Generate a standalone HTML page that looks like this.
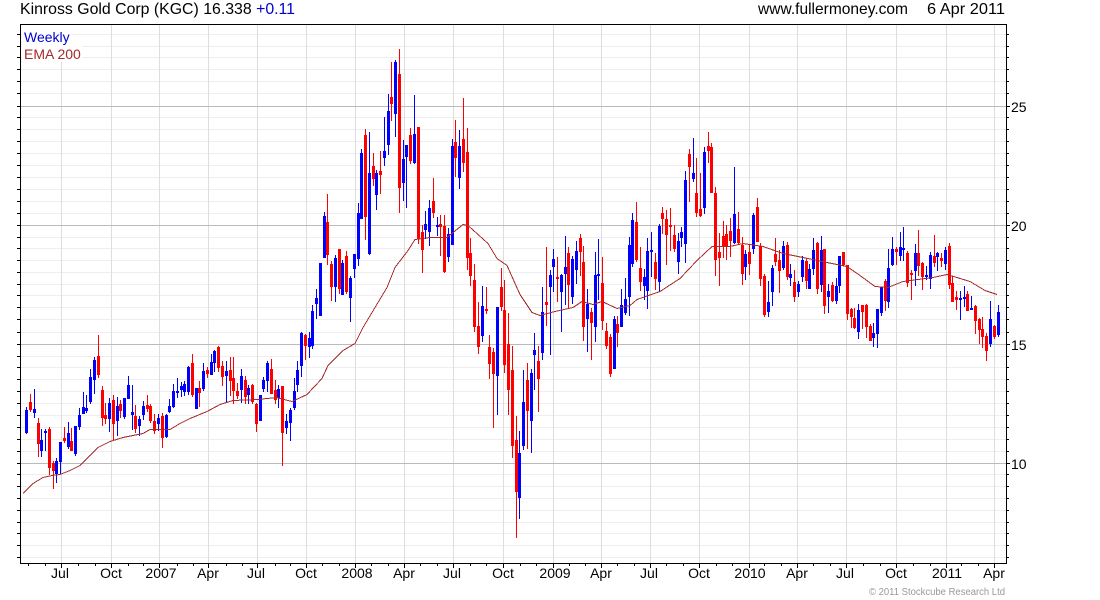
<!DOCTYPE html>
<html><head><meta charset="utf-8"><title>Kinross Gold Corp (KGC)</title>
<style>html,body{margin:0;padding:0;background:#fff;width:1100px;height:600px;overflow:hidden}svg{display:block}text{font-family:"Liberation Sans",Arial,sans-serif}</style></head>
<body>
<svg width="1100" height="600" viewBox="0 0 1100 600" xmlns="http://www.w3.org/2000/svg">
<rect width="1100" height="600" fill="#fff"/>
<g shape-rendering="crispEdges" fill="none" stroke-width="1">
<path stroke="#eee" d="M21 34.5H1006M21 46.5H1006M21 57.5H1006M21 69.5H1006M21 81.5H1006M21 93.5H1006M21 117.5H1006M21 129.5H1006M21 141.5H1006M21 153.5H1006M21 165.5H1006M21 177.5H1006M21 189.5H1006M21 201.5H1006M21 213.5H1006M21 237.5H1006M21 248.5H1006M21 260.5H1006M21 272.5H1006M21 284.5H1006M21 295.5H1006M21 307.5H1006M21 319.5H1006M21 332.5H1006M21 356.5H1006M21 367.5H1006M21 379.5H1006M21 391.5H1006M21 403.5H1006M21 415.5H1006M21 427.5H1006M21 439.5H1006M21 451.5H1006M21 474.5H1006M21 486.5H1006M21 498.5H1006M21 510.5H1006M21 522.5H1006M21 533.5H1006M21 545.5H1006M21 557.5H1006"/>
<path stroke="#ddd" d="M61.5 25V563M111.5 25V563M159.5 25V563M208.5 25V563M257.5 25V563M306.5 25V563M355.5 25V563M404.5 25V563M453.5 25V563M503.5 25V563M553.5 25V563M601.5 25V563M650.5 25V563M699.5 25V563M749.5 25V563M797.5 25V563M846.5 25V563M896.5 25V563M946.5 25V563M994.5 25V563"/>
<path stroke="#bbb" d="M21 106.5H1006M21 225.5H1006M21 344.5H1006M21 463.5H1006"/>
<rect x="21" y="25" width="50" height="20" fill="#fff" stroke="none"/>
<rect x="21" y="45" width="61" height="17" fill="#fff" stroke="none"/>
<!-- blue wicks -->
<path stroke="#0000ff" d="M26.5 407V434M34.5 389V418M41.5 429V457M45.5 429V451M56.5 458V483M60.5 442V474M68.5 422V449M75.5 426V456M79.5 408V430M83.5 392V414M86.5 395V413M90.5 369V404M94.5 357V394M109.5 398V432M117.5 397V436M124.5 398V419M128.5 376V399M132.5 385V430M139.5 416V436M143.5 401V420M158.5 414V431M166.5 414V438M169.5 399V413M173.5 384V408M177.5 378V398M181.5 382V397M184.5 381V396M188.5 366V395M196.5 388V409M203.5 363V391M211.5 354V375M214.5 350V372M226.5 361V402M241.5 369V403M248.5 385V404M260.5 395V421M263.5 377V392M267.5 361V392M278.5 385V408M286.5 414V434M290.5 408V441M294.5 378V410M297.5 361V392M301.5 332V377M309.5 332V358M312.5 305V349M316.5 289V319M320.5 263V316M324.5 212V258M335.5 255V302M342.5 260V295M350.5 276V322M354.5 254V278M358.5 203V266M361.5 149V219M369.5 132V255M376.5 170V210M384.5 117V166M388.5 94V155M395.5 60V137M403.5 140V201M406.5 145V208M414.5 95V164M425.5 211V239M429.5 200V246M437.5 217V236M448.5 228V262M452.5 139V245M459.5 130V189M482.5 286V342M497.5 307V415M519.5 431V519M523.5 370V450M531.5 369V453M534.5 333V390M542.5 287V360M550.5 270V355M553.5 249V292M561.5 274V332M565.5 236V305M572.5 256V304M576.5 241V284M587.5 289V352M595.5 252V342M598.5 239V300M614.5 316V369M621.5 289V327M625.5 278V315M629.5 237V316M632.5 213V267M644.5 269V300M647.5 238V309M651.5 232V277M659.5 224V292M678.5 233V274M681.5 227V247M685.5 171V263M693.5 138V182M704.5 147V214M734.5 167V244M745.5 250V280M753.5 213V254M768.5 281V317M772.5 265V306M783.5 241V270M790.5 264V286M798.5 281V297M802.5 256V282M809.5 264V289M813.5 238V275M821.5 236V292M828.5 284V313M836.5 278V304M839.5 256V293M858.5 304V339M873.5 323V347M877.5 309V348M881.5 287V316M888.5 249V308M892.5 237V266M900.5 232V261M903.5 227V261M915.5 244V286M926.5 266V280M930.5 252V289M937.5 252V271M945.5 247V270M960.5 291V320M964.5 286V307M971.5 296V310M990.5 301V347M998.5 305V337"/>
<!-- red wicks -->
<path stroke="#ff0000" d="M30.5 394V412M38.5 418V457M49.5 427V475M53.5 461V489M64.5 427V443M71.5 428V451M98.5 335V378M102.5 386V426M105.5 403V424M113.5 395V441M120.5 400V418M135.5 405V433M147.5 395V412M150.5 404V423M154.5 414V434M162.5 413V448M192.5 354V397M199.5 381V407M207.5 367V378M218.5 346V372M222.5 361V386M230.5 357V396M233.5 357V404M237.5 383V399M245.5 376V404M252.5 384V404M256.5 403V432M271.5 359V394M275.5 380V404M282.5 386V466M305.5 334V360M327.5 194V265M331.5 261V301M339.5 249V294M346.5 251V294M365.5 129V240M373.5 153V186M380.5 151V194M391.5 62V121M399.5 49V213M410.5 128V164M418.5 127V244M422.5 225V273M433.5 178V218M440.5 215V256M444.5 215V273M455.5 120V177M463.5 98V172M467.5 128V270M470.5 238V286M474.5 264V332M478.5 302V354M486.5 287V314M489.5 335V379M493.5 348V428M501.5 268V311M504.5 280V373M508.5 313V415M512.5 346V458M516.5 416V538M527.5 363V449M538.5 346V412M546.5 247V326M557.5 257V302M568.5 247V308M580.5 234V276M583.5 246V341M591.5 308V360M602.5 257V330M606.5 323V349M610.5 334V377M617.5 316V347M636.5 202V262M640.5 247V291M655.5 253V290M662.5 207V234M666.5 210V265M670.5 208V251M674.5 225V252M689.5 149V202M696.5 158V217M700.5 173V217M708.5 132V163M711.5 143V193M715.5 187V276M719.5 233V286M723.5 221V258M726.5 225V260M730.5 218V257M738.5 212V244M742.5 237V285M749.5 244V275M757.5 198V242M760.5 243V286M764.5 274V317M775.5 238V266M779.5 250V293M787.5 242V280M794.5 270V302M806.5 258V289M817.5 242V294M824.5 249V314M832.5 282V302M843.5 252V266M847.5 265V320M851.5 308V328M854.5 308V329M862.5 305V329M866.5 304V338M870.5 324V341M885.5 279V311M896.5 247V265M907.5 251V287M911.5 270V300M918.5 230V276M922.5 262V290M934.5 235V267M941.5 253V267M949.5 243V289M952.5 276V302M956.5 291V310M967.5 291V311M975.5 305V334M979.5 318V344M982.5 317V348M986.5 333V361M994.5 325V339"/>
<!-- blue bodies -->
<path stroke="#0000ff" stroke-width="3" d="M26.5 410V433M34.5 409V413M41.5 440V451M45.5 431V433M56.5 461V474M60.5 442V462M68.5 433V447M75.5 426V454M79.5 415V427M83.5 407V414M86.5 408V411M90.5 377V402M94.5 360V380M109.5 403V419M117.5 406V421M124.5 398V417M128.5 385V399M132.5 412V415M139.5 419V426M143.5 406V415M158.5 418V424M166.5 415V437M169.5 406V412M173.5 391V407M177.5 391V393M181.5 386V390M184.5 384V392M188.5 367V392M196.5 388V409M203.5 371V389M211.5 362V375M214.5 351V363M226.5 371V376M241.5 376V390M248.5 388V395M260.5 395V421M263.5 380V389M267.5 363V381M278.5 389V398M286.5 421V428M290.5 410V423M294.5 391V408M297.5 370V385M301.5 333V366M309.5 338V347M312.5 311V346M316.5 298V304M320.5 263V316M324.5 216V258M335.5 258V287M342.5 263V295M350.5 278V298M354.5 254V269M358.5 213V259M361.5 153V219M369.5 173V254M376.5 173V195M384.5 151V158M388.5 111V145M395.5 62V114M403.5 159V183M406.5 145V157M414.5 134V163M425.5 224V230M429.5 208V232M437.5 225V227M448.5 234V257M452.5 146V245M459.5 146V178M482.5 306V336M497.5 307V376M519.5 453V498M523.5 402V446M531.5 373V421M534.5 350V355M542.5 312V353M550.5 275V287M553.5 259V267M561.5 275V292M565.5 267V274M572.5 259V297M576.5 251V270M587.5 304V319M595.5 275V327M598.5 274V276M614.5 319V369M621.5 305V327M625.5 299V313M629.5 245V297M632.5 220V264M644.5 277V286M647.5 251V291M651.5 250V252M659.5 226V282M678.5 241V262M681.5 232V238M685.5 180V244M693.5 173V179M704.5 152V208M734.5 214V243M745.5 254V267M753.5 215V249M768.5 302V312M772.5 268V292M783.5 246V268M790.5 274V278M798.5 284V292M802.5 260V277M809.5 269V289M813.5 250V269M821.5 250V285M828.5 291V297M836.5 286V301M839.5 256V286M858.5 310V332M873.5 333V338M877.5 309V334M881.5 287V313M888.5 268V302M892.5 249V265M900.5 247V256M903.5 248V250M915.5 253V271M926.5 275V277M930.5 255V279M937.5 253V257M945.5 250V264M960.5 298V300M964.5 297V299M971.5 308V310M990.5 319V344M998.5 312V335"/>
<!-- red bodies -->
<path stroke="#ff0000" stroke-width="3" d="M30.5 402V410M38.5 423V444M49.5 429V468M53.5 463V471M64.5 438V441M71.5 441V451M98.5 356V375M102.5 390V418M105.5 415V419M113.5 400V424M120.5 404V411M135.5 416V429M147.5 405V409M150.5 406V421M154.5 421V431M162.5 416V438M192.5 363V395M199.5 388V393M207.5 370V374M218.5 347V368M222.5 366V377M230.5 370V381M233.5 378V391M237.5 391V396M245.5 380V397M252.5 385V402M256.5 404V424M271.5 369V394M275.5 390V400M282.5 386V433M305.5 335V346M327.5 222V255M331.5 264V287M339.5 249V289M346.5 256V292M365.5 135V217M373.5 166V179M380.5 171V175M391.5 97V104M399.5 74V188M410.5 135V161M418.5 127V239M422.5 232V250M433.5 201V213M440.5 224V227M444.5 226V272M455.5 142V158M463.5 139V163M467.5 152V258M470.5 253V276M474.5 280V327M478.5 326V347M486.5 309V311M489.5 347V364M493.5 352V374M501.5 287V307M504.5 310V365M508.5 344V390M512.5 370V446M516.5 440V492M527.5 380V411M538.5 361V379M546.5 302V305M557.5 277V279M568.5 253V285M580.5 238V252M583.5 262V327M591.5 312V323M602.5 283V321M606.5 331V346M610.5 337V374M617.5 324V333M636.5 222V260M640.5 268V282M655.5 262V279M662.5 213V219M666.5 219V235M670.5 225V227M674.5 235V249M689.5 154V167M696.5 193V213M700.5 209V216M708.5 146V151M711.5 147V193M715.5 193V260M719.5 252V258M723.5 236V246M726.5 234V246M730.5 231V241M738.5 229V243M742.5 245V274M749.5 252V264M757.5 207V242M760.5 246V279M764.5 276V315M775.5 254V262M779.5 260V271M787.5 245V277M794.5 282V297M806.5 261V281M817.5 243V289M824.5 249V306M832.5 285V301M843.5 252V265M847.5 265V314M851.5 309V317M854.5 318V328M862.5 305V312M866.5 305V327M870.5 326V341M885.5 281V301M896.5 249V252M907.5 253V283M911.5 273V275M918.5 253V266M922.5 263V277M934.5 256V263M941.5 258V261M949.5 246V285M952.5 283V302M956.5 297V300M967.5 294V311M975.5 306V321M979.5 319V330M982.5 329V337M986.5 336V351M994.5 326V337"/>
<!-- EMA -->
<polyline stroke="#a52a2a" fill="none" points="23,493.5 33,483.5 43,477.5 52,475.5 60,474.5 70,470.5 80,465.5 88,457.5 98,447.5 110,441.5 123,437.5 143,433.5 150,429.5 170,429.5 180,423.5 190,418.5 207,411.5 220,404.5 233,400.5 257,399.5 277,397.5 280,398.5 292,401.5 307,394.5 322,378.5 328,365.5 343,350.5 355,343.5 363,327.5 375,307.5 387,287.5 395,267.5 408,250.5 415,239.5 430,237.5 447,237.5 463,224.5 468,225.5 488,243.5 497,258.5 507,265.5 520,294.5 532,312.5 540,315.5 555,311.5 573,307.5 582,301.5 593,304.5 602,301.5 617,308.5 630,305.5 637,299.5 660,291.5 680,278.5 697,260.5 712,246.5 730,246.5 743,243.5 763,246.5 783,253.5 803,257.5 827,262.5 847,266.5 860,275.5 875,286.5 888,287.5 903,281.5 933,277.5 947,274.5 970,281.5 985,290.5 997,294.5"/>
<!-- ticks -->
<path stroke="#000" d="M17 34.5H20M17 46.5H20M17 57.5H20M17 69.5H20M17 81.5H20M17 93.5H20M17 106.5H20M17 117.5H20M17 129.5H20M17 141.5H20M17 153.5H20M17 165.5H20M17 177.5H20M17 189.5H20M17 201.5H20M17 213.5H20M17 225.5H20M17 237.5H20M17 248.5H20M17 260.5H20M17 272.5H20M17 284.5H20M17 295.5H20M17 307.5H20M17 319.5H20M17 332.5H20M17 344.5H20M17 356.5H20M17 367.5H20M17 379.5H20M17 391.5H20M17 403.5H20M17 415.5H20M17 427.5H20M17 439.5H20M17 451.5H20M17 463.5H20M17 474.5H20M17 486.5H20M17 498.5H20M17 510.5H20M17 522.5H20M17 533.5H20M17 545.5H20M17 557.5H20"/>
<path stroke="#000" d="M1007 34.5H1009M1007 46.5H1009M1007 57.5H1009M1007 69.5H1009M1007 81.5H1009M1007 93.5H1009M1007 106.5H1010M1007 117.5H1009M1007 129.5H1009M1007 141.5H1009M1007 153.5H1009M1007 165.5H1009M1007 177.5H1009M1007 189.5H1009M1007 201.5H1009M1007 213.5H1009M1007 225.5H1010M1007 237.5H1009M1007 248.5H1009M1007 260.5H1009M1007 272.5H1009M1007 284.5H1009M1007 295.5H1009M1007 307.5H1009M1007 319.5H1009M1007 332.5H1009M1007 344.5H1010M1007 356.5H1009M1007 367.5H1009M1007 379.5H1009M1007 391.5H1009M1007 403.5H1009M1007 415.5H1009M1007 427.5H1009M1007 439.5H1009M1007 451.5H1009M1007 463.5H1010M1007 474.5H1009M1007 486.5H1009M1007 498.5H1009M1007 510.5H1009M1007 522.5H1009M1007 533.5H1009M1007 545.5H1009M1007 557.5H1009"/>
<path stroke="#000" d="M28.5 564V566M45.5 564V566M78.5 564V566M95.5 564V566M128.5 564V566M143.5 564V566M177.5 564V566M193.5 564V566M226.5 564V566M242.5 564V566M275.5 564V566M290.5 564V566M322.5 564V566M339.5 564V566M371.5 564V566M388.5 564V566M420.5 564V566M437.5 564V566M470.5 564V566M486.5 564V566M520.5 564V566M536.5 564V566M569.5 564V566M585.5 564V566M617.5 564V566M634.5 564V566M666.5 564V566M683.5 564V566M716.5 564V566M732.5 564V566M764.5 564V566M781.5 564V566M813.5 564V566M830.5 564V566M863.5 564V566M880.5 564V566M913.5 564V566M930.5 564V566M961.5 564V566M978.5 564V566"/>
<path stroke="#000" d="M61.5 564V568M111.5 564V568M159.5 564V568M208.5 564V568M257.5 564V568M306.5 564V568M355.5 564V568M404.5 564V568M453.5 564V568M503.5 564V568M553.5 564V568M601.5 564V568M650.5 564V568M699.5 564V568M749.5 564V568M797.5 564V568M846.5 564V568M896.5 564V568M946.5 564V568M994.5 564V568"/>
<rect x="20.5" y="24.5" width="986" height="539" stroke="#000" fill="none"/>
</g>
<text x="20" y="14" font-size="16" fill="#000" textLength="275" lengthAdjust="spacingAndGlyphs">Kinross Gold Corp (KGC) 16.338 <tspan fill="#0000cc">+0.11</tspan></text>
<text x="758" y="14" font-size="16" fill="#000" textLength="150" lengthAdjust="spacingAndGlyphs">www.fullermoney.com</text>
<text x="927" y="14" font-size="16" fill="#000" textLength="78" lengthAdjust="spacingAndGlyphs">6 Apr 2011</text>
<text x="24" y="42" font-size="14" fill="#0000cc">Weekly</text>
<text x="24" y="59" font-size="14" fill="#a52a2a">EMA 200</text>
<g font-size="14" fill="#000">
<text x="1011" y="112">25</text><text x="1011" y="231">20</text><text x="1011" y="350">15</text><text x="1011" y="469">10</text>
</g>
<g font-size="14" fill="#000" text-anchor="middle">
<text x="60" y="578">Jul</text><text x="111" y="578">Oct</text><text x="161" y="578">2007</text><text x="208" y="578">Apr</text><text x="256" y="578">Jul</text><text x="306" y="578">Oct</text><text x="357" y="578">2008</text><text x="404" y="578">Apr</text><text x="452" y="578">Jul</text><text x="503" y="578">Oct</text><text x="555" y="578">2009</text><text x="601" y="578">Apr</text><text x="649" y="578">Jul</text><text x="699" y="578">Oct</text><text x="750" y="578">2010</text><text x="797" y="578">Apr</text><text x="845" y="578">Jul</text><text x="896" y="578">Oct</text><text x="947" y="578">2011</text><text x="994" y="578">Apr</text>
</g>
<text x="869" y="595" font-size="10" fill="#999" textLength="136" lengthAdjust="spacingAndGlyphs">© 2011 Stockcube Research Ltd</text>
</svg>
</body></html>
